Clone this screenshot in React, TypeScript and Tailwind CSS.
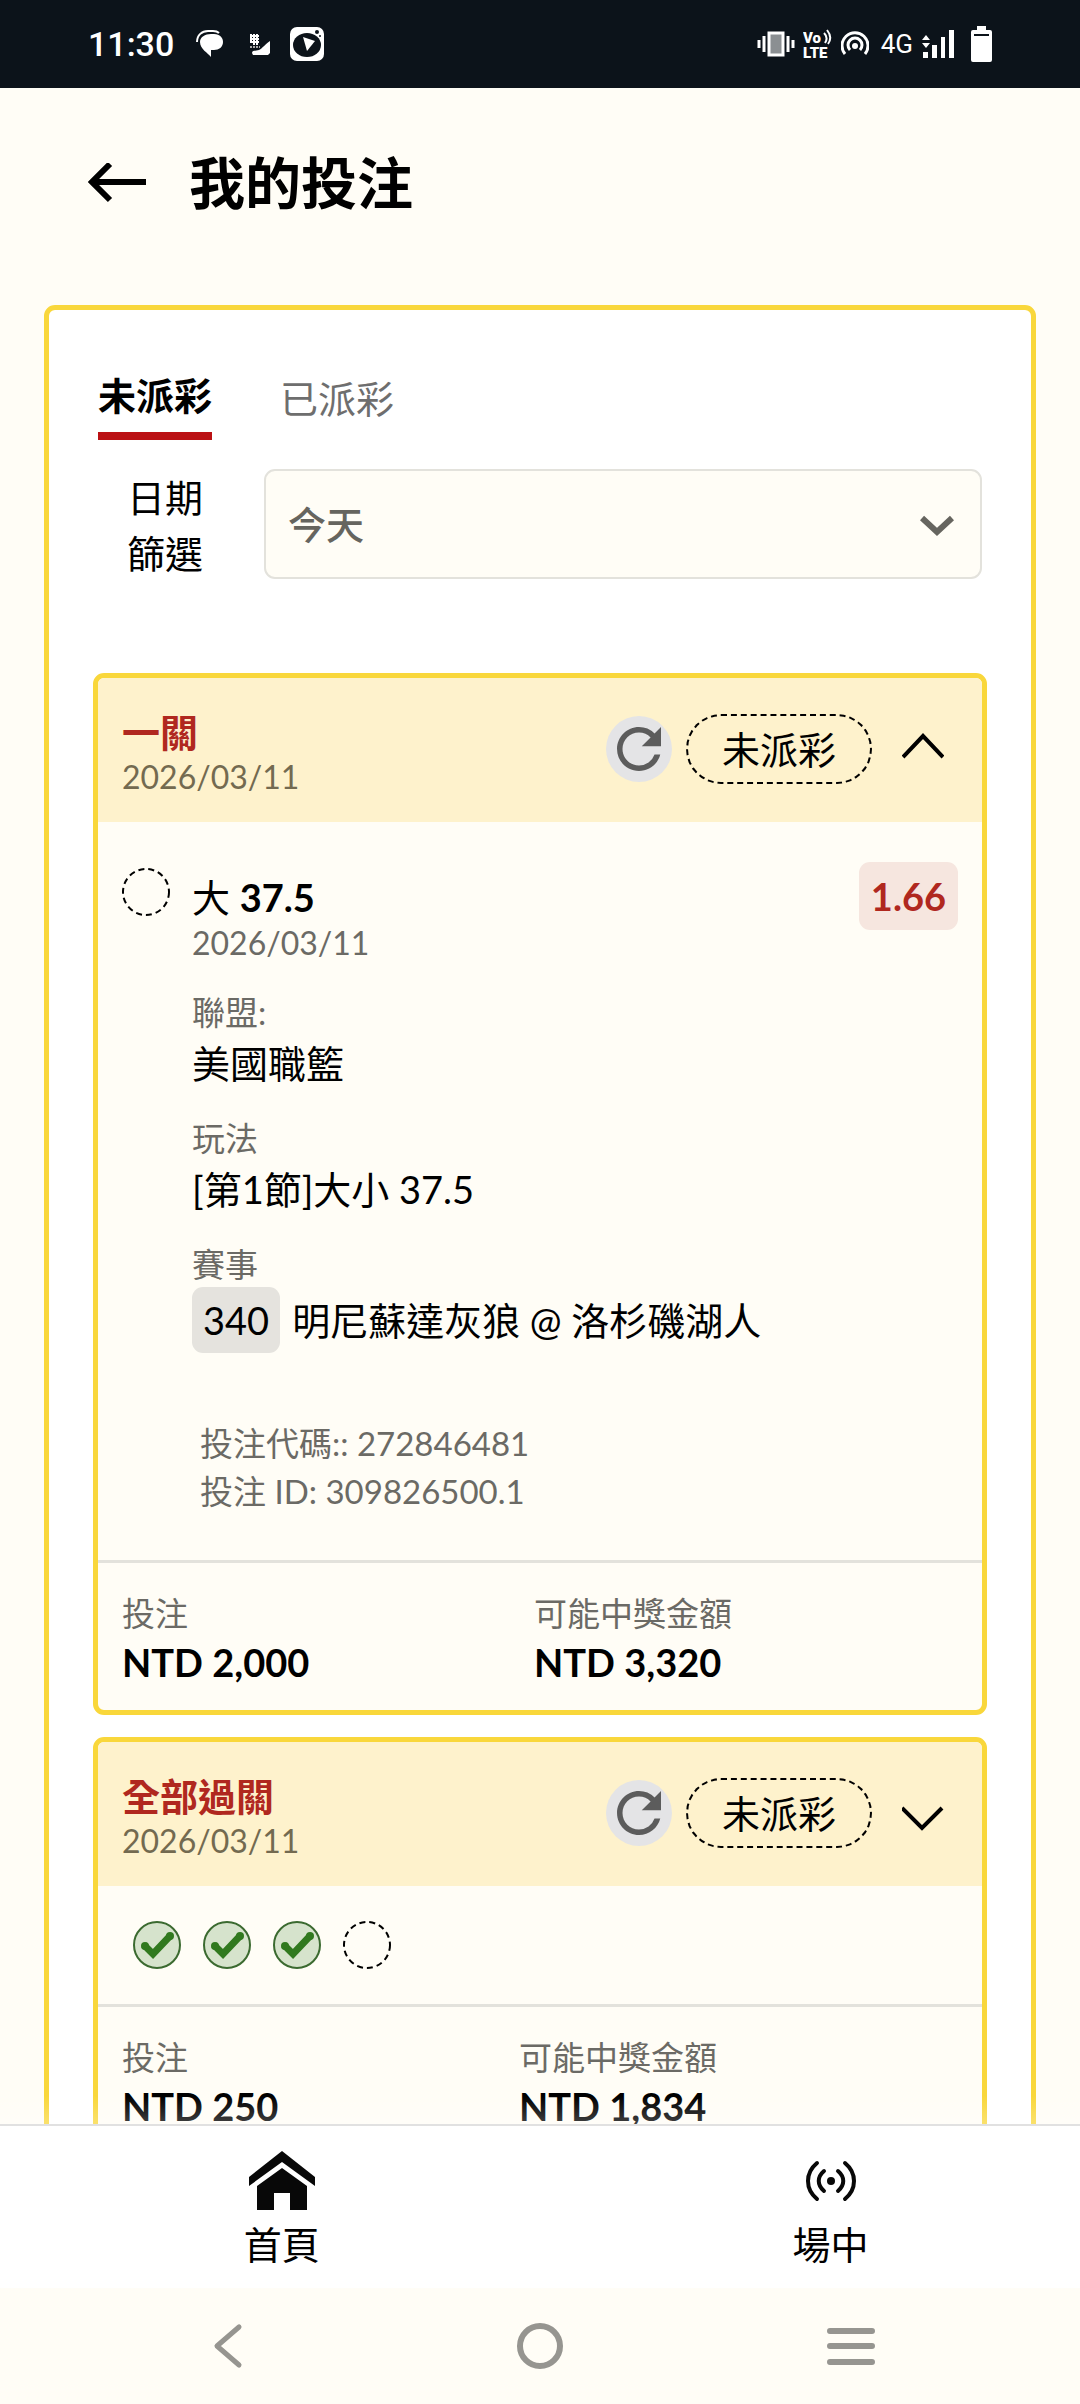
import { useState } from "react";
import { MdRefresh } from "react-icons/md";

interface BetLeg {
  pick: string;
  line: string;
  date: string;
  odds: string;
  league: string;
  market: string;
  gameNo: string;
  match: string;
  betCode: string;
  betId: string;
}

interface Bet {
  id: number;
  title: string;
  date: string;
  stake: string;
  payout: string;
  leg?: BetLeg;
  results?: string[];
}

const bets: Bet[] = [
  {
    id: 1,
    title: "一關",
    date: "2026/03/11",
    stake: "NTD 2,000",
    payout: "NTD 3,320",
    leg: {
      pick: "大",
      line: "37.5",
      date: "2026/03/11",
      odds: "1.66",
      league: "美國職籃",
      market: "[第1節]大小 37.5",
      gameNo: "340",
      match: "明尼蘇達灰狼 @ 洛杉磯湖人",
      betCode: "272846481",
      betId: "309826500.1",
    },
  },
  {
    id: 2,
    title: "全部過關",
    date: "2026/03/11",
    stake: "NTD 250",
    payout: "NTD 1,834",
    results: ["won", "won", "won", "pending"],
  },
];

const StatusBar = () => (
  <div className="flex items-center justify-between w-full h-[88px] shrink-0 pl-[88px] pr-[88px] bg-[#0c131a] text-white font-['Roboto',sans-serif]">
    <div className="flex items-center">
      <span className="text-[34px] leading-[40px] font-medium">11:30</span>
      <svg className="ml-[22px] w-7 h-7" viewBox="0 0 28 28" fill="none">
        <path
          d="M15 4h3c6 0 9 4 9 8 0 5-4 8-9 8h-3v7C12 23 4 19 4 12c0-5 5-8 11-8z"
          fill="#fff"
        />
        <path d="M1 12C1 5 6 1 12 1h5c3 0 5 1 6 2" stroke="#fff" strokeWidth="2" />
      </svg>
      <svg className="ml-6 w-6 h-7" viewBox="0 0 24 28" fill="none">
        <path
          d="M2 6h9M6 4v11M2 9h9M2 12h9M3 4v8M9 4v11"
          stroke="#fff"
          strokeWidth="2"
        />
        <path d="M2 17h10" stroke="#aaa" strokeWidth="2" strokeDasharray="2 1" />
        <path d="M4 23c0-3 4-2 7-3 4-2 6-6 11-9v12l-2 2H5z" fill="#fff" />
      </svg>
      <svg className="ml-[18px] w-[34px] h-[34px]" viewBox="0 0 34 34">
        <rect width="34" height="34" rx="7" fill="#fff" />
        <ellipse cx="17" cy="18" rx="14" ry="12" fill="#0c131a" />
        <path d="M13 10l12 4-8 10z" fill="#fff" />
        <circle cx="27" cy="5" r="2" fill="#0c131a" />
        <circle cx="30" cy="9" r="1" fill="#0c131a" />
      </svg>
    </div>

    <div className="flex items-center">
      <svg className="w-[38px] h-[28px]" viewBox="0 0 38 28" fill="none">
        <path d="M2 10v8M7 6v16M31 6v16M36 10v8" stroke="#fff" strokeWidth="3" />
        <rect
          x="12"
          y="3"
          width="14"
          height="22"
          fill="#8b8f92"
          stroke="#fff"
          strokeWidth="3"
        />
      </svg>
      <svg className="ml-2 w-[30px] h-9" viewBox="0 0 30 36" fill="none">
        <text x="0" y="17" fontSize="15" fontWeight="900" fill="#fff">
          Vo
        </text>
        <path
          d="M21 7c3 3 3 7 1 10M24 4c4 5 4 10 1 14"
          stroke="#fff"
          strokeWidth="2"
        />
        <text x="0" y="32" fontSize="15" fontWeight="900" fill="#fff">
          LTE
        </text>
      </svg>
      <svg className="ml-2 w-7 h-7" viewBox="0 0 28 28" fill="none">
        <path
          d="M4 24a13 13 0 1 1 20 0M9 20a7 7 0 1 1 10 0"
          stroke="#fff"
          strokeWidth="3"
        />
        <circle cx="14" cy="16" r="3" fill="#fff" />
      </svg>
      <span className="ml-3 text-[26px] leading-[32px]">4G</span>
      <svg className="ml-2 w-[34px] h-[30px]" viewBox="0 0 34 30" fill="#fff">
        <path d="M5 6l4 5H1zM5 19l4-5H1z" />
        <path d="M2 23h5v6H2zM11 16h5v13h-5zM20 8h4v21h-4zM28 1h5v28h-5z" />
      </svg>
      <svg className="ml-4 w-[21px] h-9" viewBox="0 0 21 36">
        <path
          d="M6 0h9v4h4a2 2 0 0 1 2 2v28a2 2 0 0 1-2 2H2a2 2 0 0 1-2-2V6a2 2 0 0 1 2-2h4z"
          fill="#fff"
        />
        <path d="M3 9h15" stroke="#0c131a" strokeWidth="2" />
      </svg>
    </div>
  </div>
);

const PendingMark = () => (
  <svg className="w-12 h-12 shrink-0" viewBox="0 0 48 48" fill="none">
    <circle
      cx="24"
      cy="24"
      r="23"
      stroke="#000"
      strokeWidth="2"
      strokeDasharray="6 4"
    />
  </svg>
);

const WonMark = () => (
  <svg className="w-12 h-12 shrink-0" viewBox="0 0 48 48" fill="none">
    <circle cx="24" cy="24" r="23" fill="#d6e3cc" stroke="#3b6a30" strokeWidth="2" />
    <path d="M11 24l9 9 17-18" stroke="#31791f" strokeWidth="7" />
    <circle cx="12" cy="25" r="4" fill="#31791f" />
    <circle cx="37" cy="15" r="4" fill="#31791f" />
  </svg>
);

const LegDetails = ({ leg }: { leg: BetLeg }) => (
  <div className="flex items-start pt-10 pb-[45px] px-6">
    <div className="pt-1.5">
      <PendingMark />
    </div>
    <div className="flex-1 pt-3 ml-[22px]">
      <p className="text-[38px] leading-[46px]">
        {leg.pick} <span className="font-bold">{leg.line}</span>
      </p>
      <p className="text-[32px] leading-[46px] text-[#6b6a65]">{leg.date}</p>

      <p className="mt-[23px] text-[33px] leading-[46px] text-[#6b6a65]">聯盟:</p>
      <p className="text-[38px] leading-[56px]">{leg.league}</p>

      <p className="mt-6 text-[33px] leading-[46px] text-[#6b6a65]">玩法</p>
      <p className="text-[38px] leading-[56px]">{leg.market}</p>

      <p className="mt-6 text-[33px] leading-[46px] text-[#6b6a65]">賽事</p>
      <div className="flex items-center text-[38px] leading-[66px]">
        <span className="px-[11px] rounded-[11px] bg-[#e5e3de]">{leg.gameNo}</span>
        <span className="ml-3">{leg.match}</span>
      </div>

      <div className="mt-[66px] pl-2 text-[33px] leading-[48px] text-[#6b6a65]">
        <p>投注代碼:: {leg.betCode}</p>
        <p>投注 ID: {leg.betId}</p>
      </div>
    </div>
    <span className="px-3 rounded-[11px] bg-[#f6e6df] text-[38px] leading-[68px] font-bold text-[#b0281f]">
      {leg.odds}
    </span>
  </div>
);

const BetCard = ({ bet }: { bet: Bet }) => {
  const [open, setOpen] = useState(!!bet.leg);

  return (
    <div className="border-[5px] border-[#f9d73b] rounded-[11px] bg-[#fffdf6] overflow-hidden">
      {/* Card header */}
      <div className="flex items-center justify-between pl-6 pr-[38px] py-[23px] bg-[#fef2cc]">
        <div className="pt-2">
          <h2 className="text-[38px] leading-[46px] font-bold text-[#b0281f]">
            {bet.title}
          </h2>
          <p className="text-[32px] leading-[44px] text-[#736a50]">{bet.date}</p>
        </div>
        <div className="flex items-center pb-0.5">
          <button
            aria-label="重新整理"
            className="flex items-center justify-center w-[66px] h-[66px] rounded-full bg-[#e4e4e6] text-[#5c5c5c]"
          >
            <MdRefresh className="w-[66px] h-[66px]" />
          </button>
          <span className="ml-3.5 px-[34px] border-2 border-dashed border-black rounded-full text-[38px] leading-[66px]">
            未派彩
          </span>
          <button
            aria-label={open ? "收合" : "展開"}
            aria-expanded={open}
            onClick={() => setOpen(!open)}
            className="ml-[30px]"
          >
            <svg className="w-[42px] h-11" viewBox="0 0 42 44" fill="none">
              <path
                d={open ? "M1 30L21 9L41 30" : "M0 17L20 37L40 17"}
                stroke="#000"
                strokeWidth="4"
              />
            </svg>
          </button>
        </div>
      </div>

      {/* Selections */}
      {bet.leg && open && <LegDetails leg={bet.leg} />}
      {bet.results && (
        <div className="flex gap-[22px] px-[35px] py-[35px]">
          {bet.results.map((result, index) =>
            result === "won" ? <WonMark key={index} /> : <PendingMark key={index} />
          )}
        </div>
      )}

      {/* Stake and payout */}
      <div className="flex border-t-[3px] border-[#e3e2dc] px-6 pt-[27px] pb-[22px]">
        <div className={bet.leg ? "w-[412px]" : "w-[397px]"}>
          <p className="text-[33px] leading-[46px] text-[#6b6a65]">投注</p>
          <p className="text-[38px] leading-[52px] font-bold">{bet.stake}</p>
        </div>
        <div>
          <p className="text-[33px] leading-[46px] text-[#6b6a65]">可能中獎金額</p>
          <p className="text-[38px] leading-[52px] font-bold">{bet.payout}</p>
        </div>
      </div>
    </div>
  );
};

const BottomNav = () => (
  <nav className="relative flex justify-between shrink-0 h-[164px] pl-[21%] pr-[18%] border-t-2 border-[#e1e1e1] bg-white">
    {/* Fade above the bar */}
    <div className="absolute left-0 bottom-full mb-0.5 w-full h-7 bg-linear-to-t from-white/25 to-transparent pointer-events-none" />
    <a href="#home" className="flex flex-col items-center w-[110px] pt-[25px]">
      <svg className="w-[66px] h-[59px]" viewBox="0 0 66 59" fill="#080808">
        <path d="M33 0L66 26V35L33 11L0 35V26z" />
        <path d="M33 17L58 35V59H41V42H25V59H8V35z" />
      </svg>
      <span className="mt-2 text-[38px] leading-[52px]">首頁</span>
    </a>
    <a href="#live" className="flex flex-col items-center w-[110px] pt-[25px]">
      <svg
        className="w-[66px] h-[59px]"
        viewBox="0 0 66 59"
        fill="none"
        stroke="#080808"
        strokeWidth="4"
        strokeLinecap="round"
      >
        <path d="M19 12C7 22 7 38 19 48M47 12C59 22 59 38 47 48" />
        <path d="M26 20C19 26 19 34 26 40M40 20C47 26 47 34 40 40" />
        <circle cx="33" cy="30" r="4" fill="#080808" stroke="none" />
      </svg>
      <span className="mt-2 text-[38px] leading-[52px]">場中</span>
    </a>
  </nav>
);

const SystemBar = () => (
  <div className="flex items-center justify-between shrink-0 h-[116px] px-[19%] bg-[#fffdf6]">
    <button aria-label="返回">
      <svg className="w-12 h-12" viewBox="0 0 48 48" fill="none">
        <path
          d="M34 5L12 24L34 43"
          stroke="#969590"
          strokeWidth="5"
          strokeLinecap="round"
          strokeLinejoin="round"
        />
      </svg>
    </button>
    <button aria-label="主畫面">
      <svg className="w-12 h-12" viewBox="0 0 48 48" fill="none">
        <circle cx="24" cy="24" r="20" stroke="#969590" strokeWidth="6" />
      </svg>
    </button>
    <button aria-label="最近">
      <svg className="w-12 h-12" viewBox="0 0 48 48" fill="none">
        <path
          d="M3 9H45M3 24H45M3 40H45"
          stroke="#969590"
          strokeWidth="6"
          strokeLinecap="round"
        />
      </svg>
    </button>
  </div>
);

export default function App() {
  const [tab, setTab] = useState("unsettled");

  const tabClass = (name: string) =>
    tab === name
      ? "pb-[9px] border-b-8 border-[#bb1114] font-bold"
      : "pb-3 text-[#6e6e6e]";

  return (
    <div className="flex flex-col w-full h-screen bg-[#fffdf6] text-black font-['Lato','Noto_Sans_CJK_TC',sans-serif]">
      <StatusBar />

      <main className="flex-1 min-h-0 overflow-y-auto [scrollbar-width:none]">
        {/* Header */}
        <header className="flex items-center pt-[60px] pb-[87px] px-[88px]">
          <button aria-label="返回">
            <svg className="w-[58px] h-10" viewBox="0 0 58 40" fill="none">
              <path
                d="M22 1L4 19L22 37M4 19H58"
                stroke="#000"
                strokeWidth="6"
              />
            </svg>
          </button>
          <h1 className="ml-[43px] text-[56px] leading-[70px] font-bold">
            我的投注
          </h1>
        </header>

        <section className="mx-11 px-11 pt-[57px] pb-11 border-[5px] border-[#f9d73b] rounded-[11px] bg-white">
          {/* Tabs */}
          <div className="flex items-center gap-[68px] px-[5px] text-[38px] leading-[56px]">
            <button
              onClick={() => setTab("unsettled")}
              className={tabClass("unsettled")}
            >
              未派彩
            </button>
            <button
              onClick={() => setTab("settled")}
              className={tabClass("settled")}
            >
              已派彩
            </button>
          </div>

          {/* Date filter */}
          <div className="flex items-start mt-[29px] px-[5px]">
            <label
              htmlFor="date-filter"
              className="w-[134px] text-center text-[38px] leading-[56px]"
            >
              日期
              <br />
              篩選
            </label>
            <div className="relative flex-1 ml-8">
              <select
                id="date-filter"
                className="block w-full h-[110px] px-[22px] border-2 border-[#e3e2dc] rounded-[11px] bg-[#fffdf6] text-[38px] font-medium text-[#66655f] appearance-none"
              >
                <option>今天</option>
                <option>昨天</option>
              </select>
              <svg
                className="absolute right-7 top-11 w-[34px] h-6 pointer-events-none"
                viewBox="0 0 34 24"
                fill="none"
              >
                <path d="M2 5L17 19L32 5" stroke="#66655f" strokeWidth="6" />
              </svg>
            </div>
          </div>

          {/* Bets */}
          <div className="flex flex-col gap-[22px] mt-[92px]">
            {bets.map((bet) => (
              <BetCard key={bet.id} bet={bet} />
            ))}
          </div>
        </section>
      </main>

      <BottomNav />
      <SystemBar />
    </div>
  );
}
